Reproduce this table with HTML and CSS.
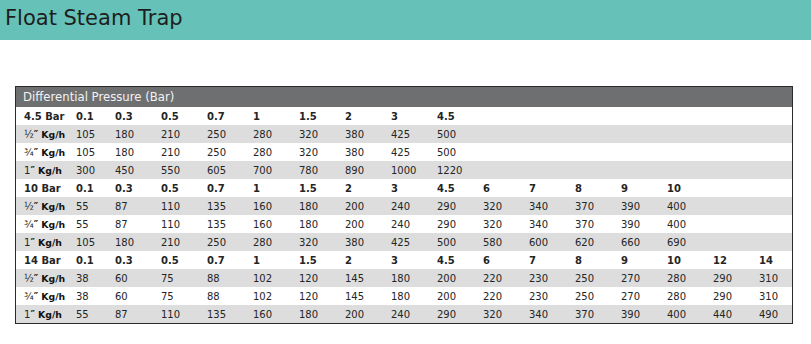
FILE: index.html
```html
<!DOCTYPE html>
<html>
<head>
<meta charset="utf-8">
<title>Float Steam Trap</title>
<link rel="stylesheet" href="styles.css">
</head>
<body>
<div class="banner">Float Steam Trap</div>
<div class="content">
<table class="trap">
<colgroup>
<col class="c-label"><col class="c-first">
<col class="c-std"><col class="c-std"><col class="c-std"><col class="c-std"><col class="c-std"><col class="c-std"><col class="c-std"><col class="c-std"><col class="c-std"><col class="c-std"><col class="c-std"><col class="c-std"><col class="c-std"><col class="c-std">
<col class="c-last">
</colgroup>
<thead>
<tr class="head"><th colspan="17">Differential Pressure (Bar)</th></tr>
</thead>
<tbody>
<tr class="bar"><td>4.5 Bar</td><td>0.1</td><td>0.3</td><td>0.5</td><td>0.7</td><td>1</td><td>1.5</td><td>2</td><td>3</td><td>4.5</td><td></td><td></td><td></td><td></td><td></td><td></td><td></td></tr>
<tr class="odd"><td>½<span class="q">″</span> <b>Kg/h</b></td><td>105</td><td>180</td><td>210</td><td>250</td><td>280</td><td>320</td><td>380</td><td>425</td><td>500</td><td></td><td></td><td></td><td></td><td></td><td></td><td></td></tr>
<tr class="even"><td>¾<span class="q">″</span> <b>Kg/h</b></td><td>105</td><td>180</td><td>210</td><td>250</td><td>280</td><td>320</td><td>380</td><td>425</td><td>500</td><td></td><td></td><td></td><td></td><td></td><td></td><td></td></tr>
<tr class="odd"><td>1<span class="q">″</span> <b>Kg/h</b></td><td>300</td><td>450</td><td>550</td><td>605</td><td>700</td><td>780</td><td>890</td><td>1000</td><td>1220</td><td></td><td></td><td></td><td></td><td></td><td></td><td></td></tr>
<tr class="bar"><td>10 Bar</td><td>0.1</td><td>0.3</td><td>0.5</td><td>0.7</td><td>1</td><td>1.5</td><td>2</td><td>3</td><td>4.5</td><td>6</td><td>7</td><td>8</td><td>9</td><td>10</td><td></td><td></td></tr>
<tr class="odd"><td>½<span class="q">″</span> <b>Kg/h</b></td><td>55</td><td>87</td><td>110</td><td>135</td><td>160</td><td>180</td><td>200</td><td>240</td><td>290</td><td>320</td><td>340</td><td>370</td><td>390</td><td>400</td><td></td><td></td></tr>
<tr class="even"><td>¾<span class="q">″</span> <b>Kg/h</b></td><td>55</td><td>87</td><td>110</td><td>135</td><td>160</td><td>180</td><td>200</td><td>240</td><td>290</td><td>320</td><td>340</td><td>370</td><td>390</td><td>400</td><td></td><td></td></tr>
<tr class="odd"><td>1<span class="q">″</span> <b>Kg/h</b></td><td>105</td><td>180</td><td>210</td><td>250</td><td>280</td><td>320</td><td>380</td><td>425</td><td>500</td><td>580</td><td>600</td><td>620</td><td>660</td><td>690</td><td></td><td></td></tr>
<tr class="bar"><td>14 Bar</td><td>0.1</td><td>0.3</td><td>0.5</td><td>0.7</td><td>1</td><td>1.5</td><td>2</td><td>3</td><td>4.5</td><td>6</td><td>7</td><td>8</td><td>9</td><td>10</td><td>12</td><td>14</td></tr>
<tr class="odd"><td>½<span class="q">″</span> <b>Kg/h</b></td><td>38</td><td>60</td><td>75</td><td>88</td><td>102</td><td>120</td><td>145</td><td>180</td><td>200</td><td>220</td><td>230</td><td>250</td><td>270</td><td>280</td><td>290</td><td>310</td></tr>
<tr class="even"><td>¾<span class="q">″</span> <b>Kg/h</b></td><td>38</td><td>60</td><td>75</td><td>88</td><td>102</td><td>120</td><td>145</td><td>180</td><td>200</td><td>220</td><td>230</td><td>250</td><td>270</td><td>280</td><td>290</td><td>310</td></tr>
<tr class="odd"><td>1<span class="q">″</span> <b>Kg/h</b></td><td>55</td><td>87</td><td>110</td><td>135</td><td>160</td><td>180</td><td>200</td><td>240</td><td>290</td><td>320</td><td>340</td><td>370</td><td>390</td><td>400</td><td>440</td><td>490</td></tr>
</tbody>
</table>
</div>
</body>
</html>
```

FILE: styles.css
```css
html, body {
  margin: 0;
  padding: 0;
  background: #ffffff;
}
body {
  font-family: "DejaVu Sans", Verdana, sans-serif;
  color: #222222;
}
.banner {
  height: 40px;
  background: #66c2b8;
  padding-left: 5px;
  font-size: 21px;
  line-height: 37px;
  color: #1e1e1e;
  box-sizing: border-box;
}
.content {
  padding: 46px 0 0 15px;
}
.trap {
  width: 778px;
  table-layout: fixed;
  border-collapse: separate;
  border-spacing: 0;
  border: 1px solid #2a2a2a;
}
.c-label { width: 60px; }
.c-first { width: 39px; }
.c-std { width: 46px; }
.c-last { width: 33px; }
.trap th,
.trap td {
  padding: 0;
  text-align: left;
  white-space: nowrap;
  overflow: hidden;
  vertical-align: middle;
}
.head th {
  height: 20px;
  background: #6e6f71;
  color: #f2f2f2;
  font-weight: normal;
  font-size: 11.7px;
  text-indent: 7px;
}
.trap tbody td {
  height: 18px;
  font-size: 10px;
  color: #252525;
}
.trap tbody td:first-child {
  text-indent: 8px;
}
.bar td {
  font-weight: bold;
  background: #ffffff;
  color: #111111;
}
.odd td {
  background: #dcdddc;
}
.even td {
  background: #ffffff;
}
.q {
  font-size: 10px;
  font-weight: bold;
}
.trap td b {
  font-size: 9.3px;
  font-weight: bold;
  color: #111111;
}
```
